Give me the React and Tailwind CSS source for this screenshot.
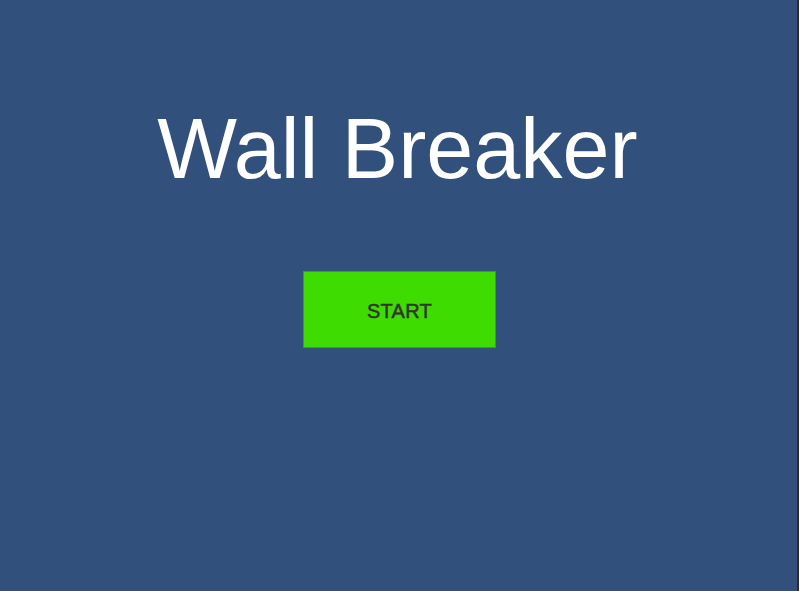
export default function App() {
  return (
    <div className="flex h-[591px] w-[799px] bg-[#2b2b2b]" style={{ fontFamily: '"Liberation Sans", Arial, sans-serif' }}>
      <div className="flex h-full w-[797px] flex-col items-center bg-[#31507b]">
        <h1 className="mt-[107px] pr-[2px] text-[84.5px] leading-[84px] text-white">Wall Breaker</h1>
        <button className="ml-[2px] mt-[80px] flex h-[77px] w-[193px] items-center justify-center border border-[#2fa80a] bg-[#3edc00] pt-[3px] text-[20px] tracking-[0.3px] text-[#333333] [-webkit-text-stroke:0.5px_#333333]">
          START
        </button>
      </div>
    </div>
  );
}
